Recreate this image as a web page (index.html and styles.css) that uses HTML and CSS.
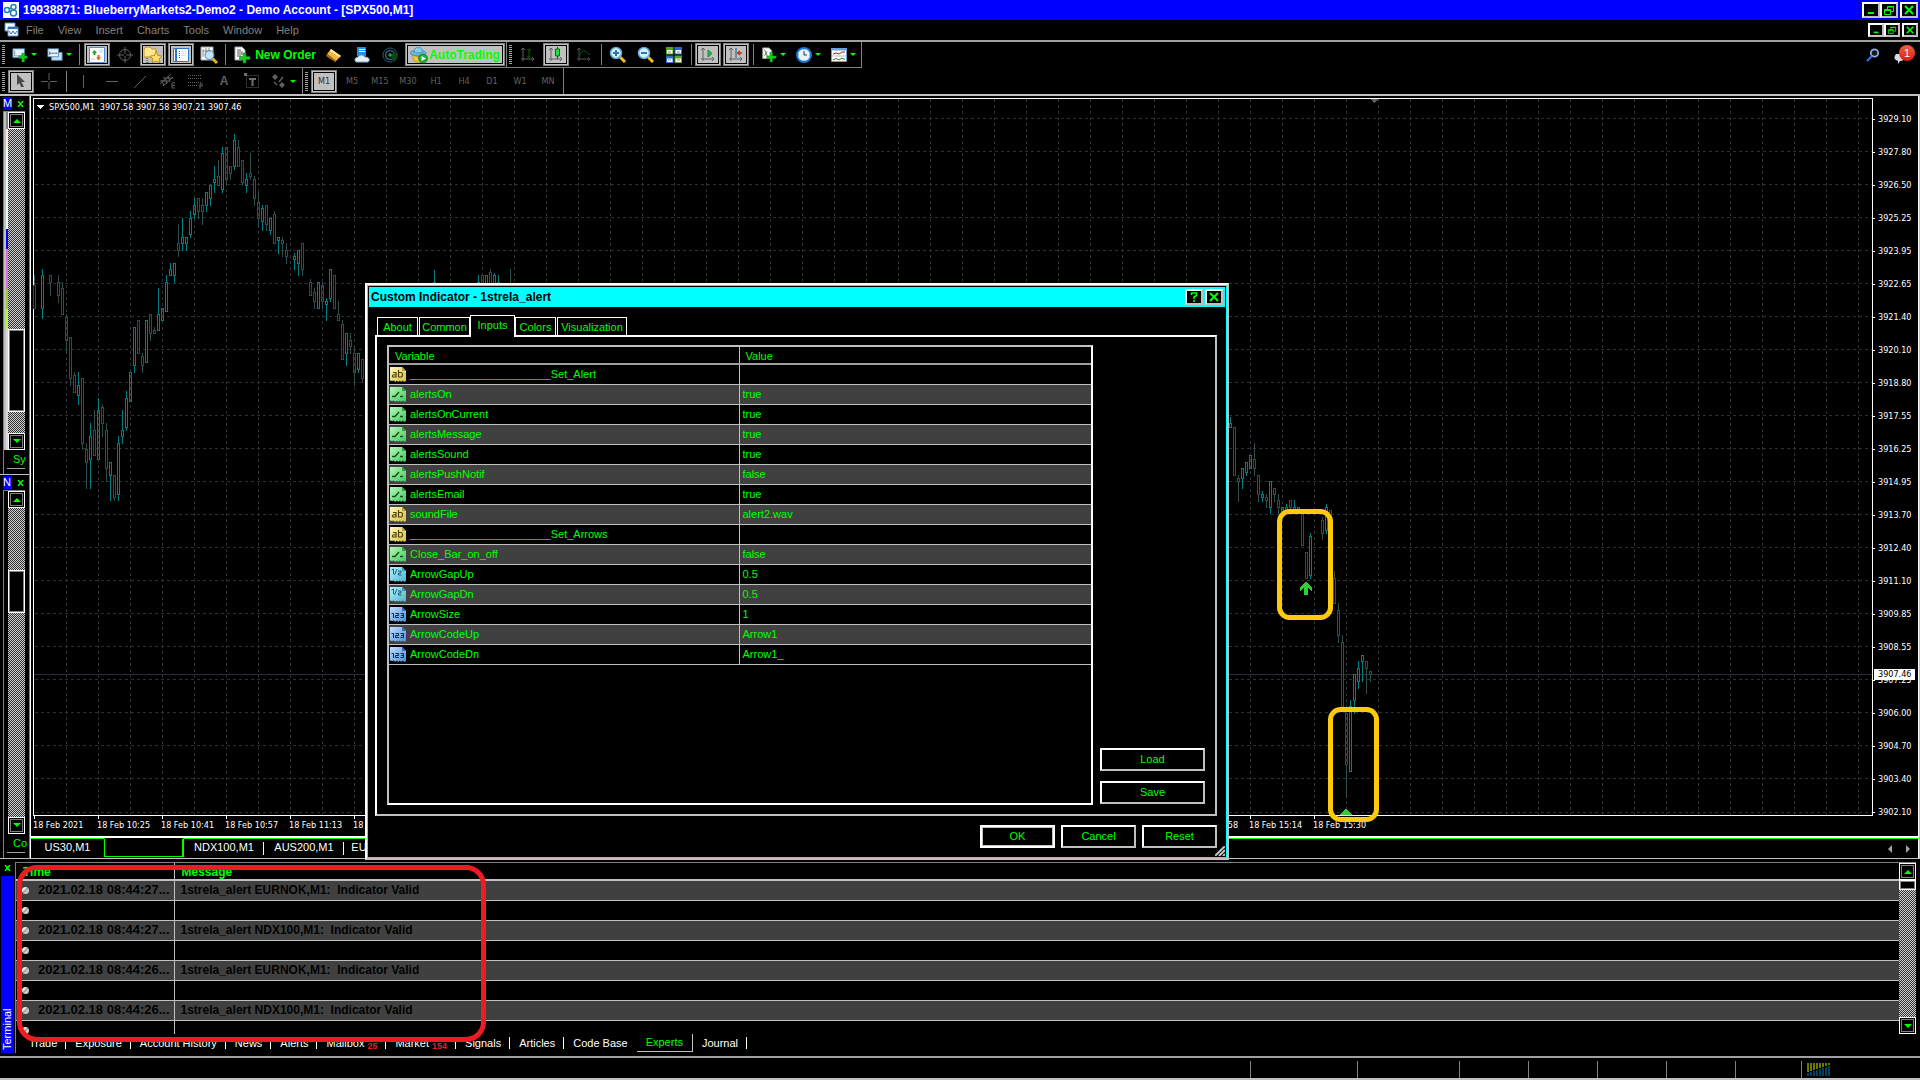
FILE: index.html
```html
<!DOCTYPE html>
<html lang="en">
<head>
<meta charset="utf-8">
<title>19938871: BlueberryMarkets2-Demo2 - Demo Account - [SPX500,M1]</title>
<link rel="stylesheet" href="styles.css">
</head>
<body>
<svg class="sprite" aria-hidden="true">
  <defs>
    <linearGradient id="gy" x2="1" y2="1"><stop offset="0" stop-color="#fff7c0"/><stop offset="1" stop-color="#d8c040"/></linearGradient>
    <linearGradient id="gg" x2="1" y2="1"><stop offset="0" stop-color="#b8f8b8"/><stop offset="1" stop-color="#40c860"/></linearGradient>
    <linearGradient id="gc" x2="1" y2="1"><stop offset="0" stop-color="#b8f4ff"/><stop offset="1" stop-color="#50b0d0"/></linearGradient>
    <linearGradient id="gb" x2="1" y2="1"><stop offset="0" stop-color="#c0e0ff"/><stop offset="1" stop-color="#5090d8"/></linearGradient>
    <linearGradient id="gr" x2="0" y2="1"><stop offset="0" stop-color="#f06040"/><stop offset="1" stop-color="#d82010"/></linearGradient>
    <path id="tag" d="M0 1H12L16 5V15L14 16L13 14.500L11 16L10 14.500L8 16L7 14.500L5 16L4 14.500L2 15L0 14.500Z"/>
    <path id="axes" d="M3 1V14M1 12H14M1 3L3 1L5 3M12 10L14 12L12 14" fill="none"/>
  </defs>
  <symbol id="i-str" viewBox="0 0 16 16"><use href="#tag" fill="url(#gy)"/><path d="M12 1V5H16" fill="#b8a030"/><g fill="none" stroke="#504400" stroke-width="1.200"><path d="M3 6.500H6V11H3.500Q2 11 2.500 9.500Q3 8.500 6 8.500M8.500 4V11H11Q12.500 11 12.500 8.500Q12.500 6.500 11 6.500H8.500"/></g></symbol>
  <symbol id="i-bool" viewBox="0 0 16 16"><use href="#tag" fill="url(#gg)"/><path d="M12 1V5H16" fill="#30a040"/><path d="M2 10.500H5L9 6M10 10.500H13" fill="none" stroke="#045010" stroke-width="1.400"/></symbol>
  <symbol id="i-dbl" viewBox="0 0 16 16"><use href="#tag" fill="url(#gc)"/><path d="M12 1V5H16" fill="#4090b0"/><path d="M1.500 4L3.500 3V8M4.500 9L7 3M8 5H11V7H8.500V9H11.500" fill="none" stroke="#106078" stroke-width="1"/></symbol>
  <symbol id="i-int" viewBox="0 0 16 16"><use href="#tag" fill="url(#gb)"/><path d="M12 1V5H16" fill="#3868b0"/><path d="M1.500 7.500H3.500V12M5.500 7.500H8.500V9.500H5.500V11.500H9M10.500 7.500H13.500V11.500H10.500M11 9.500H13" fill="none" stroke="#002858" stroke-width="1"/></symbol>
  <symbol id="i-logo" viewBox="0 0 16 16"><path d="M0 0H16V16H0Z" fill="#fff"/><g fill="none" stroke="#2080b0" stroke-width="1.500"><circle cx="4" cy="8" r="2.500"/><circle cx="10.500" cy="5" r="2.500"/><circle cx="10.500" cy="11" r="3"/><path d="M6 7L8 6M6 9L8 10"/></g></symbol>
  <symbol id="i-mdi" viewBox="0 0 16 16"><path d="M1 1H11V9H1Z" fill="#fff" stroke="#5090d0"/><path d="M4 5H14V14H4Z" fill="#fff" stroke="#5090d0"/><path d="M4 6H14" stroke="#3070c0" stroke-width="2"/><path d="M5 9L7 12L9 9L11 12L13 9" fill="none" stroke="#3070c0"/></symbol>
  <symbol id="i-newchart" viewBox="0 0 18 16"><path d="M1 1H14V11H1Z" fill="#e8f4fc" stroke="#4888b8"/><path d="M3 3V9H12" fill="none" stroke="#888"/><path d="M11 6H14V9H17V12H14V16H11V12H8V9H11Z" fill="#10d020" stroke="#087010" stroke-width=".5"/></symbol>
  <symbol id="i-profiles" viewBox="0 0 18 16"><path d="M5 5H17V14H5Z" fill="#c8e0f4" stroke="#4888b8"/><path d="M1 1H13V10H1Z" fill="#e8f4fc" stroke="#4888b8"/><path d="M3 6H11M3 4V8M11 5V7" stroke="#667"/></symbol>
  <symbol id="i-mw" viewBox="0 0 16 16"><path d="M.5.5H15.500V15.500H.5Z" fill="#fff" stroke="#5090d0"/><path d="M3 6L5.500 3L8 6H6.500V8H4.500V6Z" fill="#18a028"/><path d="M7 10.500L9.500 13.500L12 10.500H10.500V8H8.500V10.500Z" fill="#e06020"/><path d="M2 12H6M10 3H14M10 5H14" stroke="#ccc"/></symbol>
  <symbol id="i-cross" viewBox="0 0 16 16"><g fill="none" stroke="#606060"><circle cx="8" cy="8" r="5.500"/><path d="M8 0V7M8 9V16M0 8H7M9 8H16"/></g></symbol>
  <symbol id="i-nav" viewBox="0 0 18 18"><path d="M0 3L2 1H6L8 3H12V11H0Z" fill="#ffe890" stroke="#c09020"/><path d="M3 12V17H6" fill="none" stroke="#333" stroke-dasharray="1 1"/><path d="M12 5L14 9.500L18 10L15 13L16 17L12 15L8 17L9 13L6 10L10.500 9.500Z" fill="#ffe060" stroke="#b07810" stroke-width=".8"/></symbol>
  <symbol id="i-term" viewBox="0 0 16 16"><path d="M.5 1.500H15.500V14.500H.5Z" fill="#fff" stroke="#2878c8"/><path d="M3 2V14" stroke="#2878c8" stroke-width="2"/><path d="M6 4.500H7M6 6.500H7M6 8.500H7M6 10.500H7" stroke="#d02020"/><path d="M8 4.500H13M8 6.500H13M8 8.500H13" stroke="#dde"/></symbol>
  <symbol id="i-tester" viewBox="0 0 18 18"><path d="M1 1H13V14H1Z" fill="#fff" stroke="#aaa"/><path d="M3 3V11M6 2V9M9 2V7M3 5H11" stroke="#888"/><path d="M12 12L17 17" stroke="#e0b020" stroke-width="3"/><circle cx="9.500" cy="9" r="4.500" fill="#b8dcf8" fill-opacity=".8" stroke="#5080b0"/></symbol>
  <symbol id="i-order" viewBox="0 0 16 18"><path d="M1 1H8L11 4V14H1Z" fill="#fff" stroke="#aaa"/><path d="M3 4H7M3 6H9M3 8H9M3 10H7" stroke="#555"/><path d="M9 7H12V10.500H16V13.500H12V17H9V13.500H5.500V10.500H9Z" fill="#10d020" stroke="#087010" stroke-width=".5"/></symbol>
  <symbol id="i-gold" viewBox="0 0 16 16"><path d="M5 2L15 9L10 14L1 7Z" fill="#f0b838"/><path d="M5 2L15 9L13 10L4 4Z" fill="#ffe8a0"/><path d="M1 7L10 14V15.500L0 9Z" fill="#a86c10"/></symbol>
  <symbol id="i-cloud" viewBox="0 0 16 16"><path d="M3 0H12V9H3Z" fill="#1890f0"/><path d="M5 2.500H11M5 4.500H11" stroke="#fff"/><path d="M2 15Q-1 11 4 10Q7 6 11 10Q16 10 15 14L14 15Z" fill="#e8f0fa" stroke="#80a8d0"/></symbol>
  <symbol id="i-radar" viewBox="0 0 16 16"><g fill="none"><circle cx="8" cy="8" r="7" stroke="#305878"/><circle cx="8" cy="8" r="4.500" stroke="#2c6080" stroke-width="1.500"/><path d="M8 8L12 15A8 8 0 0 0 15 5" fill="#084818"/></g><circle cx="8" cy="8" r="1.800" fill="#18a030"/></symbol>
  <symbol id="i-auto" viewBox="0 0 18 18"><path d="M2 8Q9 14 15 7L13 15Q8 18 4 15Z" fill="#f0c838" stroke="#a88010" stroke-width=".6"/><ellipse cx="8" cy="7" rx="8" ry="2.800" fill="#68b8e0" stroke="#2878a0" stroke-width=".6"/><path d="M4 6Q5 0 8 2Q12 0 12.500 6Q8 8 4 6" fill="#88d0f0" stroke="#2878a0" stroke-width=".6"/><circle cx="13" cy="12.500" r="4.500" fill="#18b030" stroke="#086818" stroke-width=".6"/><path d="M11.500 10L16 12.500L11.500 15Z" fill="#fff"/></symbol>
  <symbol id="i-bars" viewBox="0 0 16 16"><use href="#axes" stroke="#606060"/><path d="M9 2V11M9 3H11M7 10H9" fill="none" stroke="#007000"/></symbol>
  <symbol id="i-candle" viewBox="0 0 16 16"><use href="#axes" stroke="#606060"/><path d="M9.500 0V12" stroke="#006000"/><path d="M7.500 2H11.500V9H7.500Z" fill="#20e040" stroke="#007010"/></symbol>
  <symbol id="i-line" viewBox="0 0 16 16"><use href="#axes" stroke="#505050"/><path d="M3 10Q6 2 9 4T14 8" fill="none" stroke="#006000"/></symbol>
  <symbol id="i-zin" viewBox="0 0 18 18"><path d="M10 10L16 16" stroke="#f0c020" stroke-width="3"/><circle cx="7" cy="7" r="5.500" fill="#d8f0ff" stroke="#60a8d8" stroke-width="1.500"/><path d="M4 7H10M7 4V10" stroke="#2878a8" stroke-width="2"/></symbol>
  <symbol id="i-zout" viewBox="0 0 18 18"><path d="M10 10L16 16" stroke="#f0c020" stroke-width="3"/><circle cx="7" cy="7" r="5.500" fill="#d8f0ff" stroke="#60a8d8" stroke-width="1.500"/><path d="M4 7H10" stroke="#2878a8" stroke-width="2"/></symbol>
  <symbol id="i-tile" viewBox="0 0 16 16"><path d="M0 0H7.500V7.500H0ZM8.500 8.500H16V16H8.500Z" fill="#50a818"/><path d="M8.500 0H16V7.500H8.500ZM0 8.500H7.500V16H0Z" fill="#2868d8"/><path d="M1 3H6.500V6.500H1ZM9.500 3H15V6.500H9.500ZM1 11.500H6.500V15H1ZM9.500 11.500H15V15H9.500Z" fill="#fff"/><path d="M2 5H5M11 5H14M2 13H5M11 13H14" stroke="#888"/></symbol>
  <symbol id="i-scroll" viewBox="0 0 16 16"><use href="#axes" stroke="#606060"/><path d="M8 3L12 6.500L8 10Z" fill="#20c040" stroke="#007010" stroke-width=".7"/></symbol>
  <symbol id="i-shift" viewBox="0 0 16 16"><use href="#axes" stroke="#606060"/><path d="M8 1V11" stroke="#0060a0"/><path d="M14 6H10M12 4L9.500 6L12 8" fill="none" stroke="#d03000" stroke-width="1.300"/></symbol>
  <symbol id="i-ind" viewBox="0 0 16 18"><path d="M1 1H8L11 4V13H1Z" fill="#fff" stroke="#aaa"/><path d="M3 3L6 10M3 10L6 5" stroke="#665"/><path d="M9 6H12V10H16V13H12V17H9V13H5.500V10H9Z" fill="#10d020" stroke="#087010" stroke-width=".5"/></symbol>
  <symbol id="i-clock" viewBox="0 0 16 16"><circle cx="8" cy="8" r="7" fill="#e8f4fc" stroke="#1878d8" stroke-width="2"/><path d="M8 4V8H11" fill="none" stroke="#333"/><path d="M8 3V2M8 14V13M3 8H2M14 8H13" stroke="#888"/></symbol>
  <symbol id="i-tmpl" viewBox="0 0 16 14"><path d="M.5.5H15.500V13.500H.5Z" fill="#fff" stroke="#68a0d8"/><path d="M0 1.500H16" stroke="#68a0d8" stroke-width="2"/><path d="M2 6L5 5L8 6L11 4H14" fill="none" stroke="#a02818"/><path d="M1 8H15" stroke="#bbb"/><path d="M2 12L5 10.500L8 12L11 10L14 11.500" fill="none" stroke="#188028"/></symbol>
  <symbol id="i-search" viewBox="0 0 14 14"><circle cx="8.500" cy="5" r="3.700" fill="#e0e8ff" fill-opacity=".1" stroke="#90a8e8" stroke-width="1.800"/><path d="M6 8L1 13" stroke="#3070e0" stroke-width="2.200"/></symbol>
  <symbol id="i-bubble" viewBox="0 0 24 20"><path d="M3 9H11Q13 16 7 16L5 19V16Q-1 14 3 9Z" fill="#d8d8e8"/><circle cx="14" cy="8" r="8" fill="url(#gr)"/></symbol>
  <symbol id="i-arrow" viewBox="0 0 16 16"><path d="M4 1L12 9H8.500L11 14H8L6.500 10L4 12Z" fill="#484848"/></symbol>
  <symbol id="i-plus" viewBox="0 0 16 16"><path d="M8 0V7M8 9V16M0 8.500H7M9 8.500H16" stroke="#606060"/></symbol>
  <symbol id="i-v" viewBox="0 0 16 16"><path d="M7.500 2V15" stroke="#606060"/></symbol>
  <symbol id="i-h" viewBox="0 0 16 16"><path d="M2 8.500H14" stroke="#606060"/></symbol>
  <symbol id="i-t" viewBox="0 0 16 16"><path d="M2 15L14 3" stroke="#606060"/></symbol>
  <symbol id="i-ch" viewBox="0 0 16 16"><path d="M0 11L11 1M3 13L13 4M2 7L4 13M5 5L7 11M8 3L10 9M0 8H8M3 5H13" stroke="#606060" fill="none"/><path d="M15 10H12V15H15M12 12.500H15" fill="none" stroke="#606060"/></symbol>
  <symbol id="i-fib" viewBox="0 0 16 16"><path d="M0 2.500H14M0 5.500H14M0 9.500H14M0 12.500H9" stroke="#606060" stroke-dasharray="1 1"/><path d="M15 11H12V16M12 13H15" fill="none" stroke="#606060"/></symbol>
  <symbol id="i-txt" viewBox="0 0 16 16"><path d="M2.500 2.500H14.500V14.500H2.500Z" fill="none" stroke="#606060" stroke-dasharray="1 1"/><path d="M5 6H12M8.500 6V13" stroke="#707070" stroke-width="2"/><path d="M0 0H3V3H0Z" fill="#707070"/></symbol>
  <symbol id="i-obj" viewBox="0 0 16 16"><path d="M4 1L7 4L4 7L1 4ZM11 15L8 12L11 9L14 12Z" fill="#606060"/><path d="M3 9L6 12M8 9L12 4" fill="none" stroke="#606060" stroke-width="1.500"/></symbol>
  <symbol id="w-min" viewBox="0 0 12 10"><path d="M3 8H9" stroke="#0f0" stroke-width="2"/></symbol>
  <symbol id="w-res" viewBox="0 0 12 10"><path d="M4.500 4V1.500H10.500V6.500H8M1.500 4.500H7.500V9.500H1.500ZM1.500 5.500H7.500M4 2H11" fill="none" stroke="#0f0"/></symbol>
  <symbol id="w-close" viewBox="0 0 12 10"><path d="M2 1L10 9M10 1L2 9" stroke="#0f0" stroke-width="2"/></symbol>
  <symbol id="w-help" viewBox="0 0 12 10"><path d="M3.500 3V1H8.500V3.500L6 5V7M6 8V10" fill="none" stroke="#0f0" stroke-width="1.600"/></symbol>
</svg>

<header class="titlebar">
  <svg class="ic16"><use href="#i-logo"/></svg>
  <h1>19938871: BlueberryMarkets2-Demo2 - Demo Account - [SPX500,M1]</h1>
  <div class="winbtns">
    <button aria-label="Minimize"><svg><use href="#w-min"/></svg></button><button aria-label="Restore"><svg><use href="#w-res"/></svg></button><button class="close" aria-label="Close"><svg><use href="#w-close"/></svg></button>
  </div>
</header>
<nav class="menubar">
  <svg class="ic16"><use href="#i-mdi"/></svg>
  <button>File</button><button>View</button><button>Insert</button><button>Charts</button><button>Tools</button><button>Window</button><button>Help</button>
  <div class="winbtns small">
    <button aria-label="Minimize chart"><svg><use href="#w-min"/></svg></button><button aria-label="Restore chart"><svg><use href="#w-res"/></svg></button><button class="close" aria-label="Close chart"><svg><use href="#w-close"/></svg></button>
  </div>
</nav>

<section class="toolbars">
  <div class="row">
    <div class="bar bordered standard">
      <i class="grip"></i>
      <button class="tb drop" aria-label="New chart"><svg><use href="#i-newchart"/></svg></button>
      <button class="tb drop" aria-label="Profiles"><svg><use href="#i-profiles"/></svg></button>
      <i class="sep"></i>
      <button class="tb on" aria-label="Market Watch"><svg><use href="#i-mw"/></svg></button>
      <button class="tb" aria-label="Data Window"><svg><use href="#i-cross"/></svg></button>
      <button class="tb on" aria-label="Navigator"><svg class="big"><use href="#i-nav"/></svg></button>
      <button class="tb on" aria-label="Terminal"><svg><use href="#i-term"/></svg></button>
      <button class="tb" aria-label="Strategy Tester"><svg class="big"><use href="#i-tester"/></svg></button>
      <i class="sep"></i>
      <button class="tb wide"><svg class="big"><use href="#i-order"/></svg>New Order</button>
      <button class="tb" aria-label="MetaEditor"><svg><use href="#i-gold"/></svg></button>
      <button class="tb" aria-label="Hosting"><svg><use href="#i-cloud"/></svg></button>
      <button class="tb" aria-label="Signals"><svg><use href="#i-radar"/></svg></button>
      <button class="tb on wide auto"><svg class="big"><use href="#i-auto"/></svg>AutoTrading</button>
    </div>
    <div class="bar bordered charting">
      <i class="grip"></i>
      <button class="tb" aria-label="Bar chart"><svg><use href="#i-bars"/></svg></button>
      <button class="tb on" aria-label="Candlesticks"><svg><use href="#i-candle"/></svg></button>
      <button class="tb" aria-label="Line chart"><svg><use href="#i-line"/></svg></button>
      <i class="sep"></i>
      <button class="tb" aria-label="Zoom in"><svg class="big"><use href="#i-zin"/></svg></button>
      <button class="tb" aria-label="Zoom out"><svg class="big"><use href="#i-zout"/></svg></button>
      <button class="tb" aria-label="Tile windows"><svg><use href="#i-tile"/></svg></button>
      <i class="sep"></i>
      <button class="tb on" aria-label="Auto scroll"><svg><use href="#i-scroll"/></svg></button>
      <button class="tb on" aria-label="Chart shift"><svg><use href="#i-shift"/></svg></button>
      <i class="sep"></i>
      <button class="tb drop" aria-label="Indicators"><svg><use href="#i-ind"/></svg></button>
      <button class="tb drop" aria-label="Periods"><svg><use href="#i-clock"/></svg></button>
      <button class="tb drop" aria-label="Templates"><svg><use href="#i-tmpl"/></svg></button>
    </div>
    <div class="corner">
      <button aria-label="Search"><svg class="search"><use href="#i-search"/></svg></button>
      <button class="bubble"><svg><use href="#i-bubble"/></svg><span>1</span></button>
    </div>
  </div>
  <div class="row">
    <div class="bar">
      <i class="grip"></i>
      <button class="tb on" aria-label="Cursor"><svg><use href="#i-arrow"/></svg></button>
      <button class="tb" aria-label="Crosshair"><svg><use href="#i-plus"/></svg></button>
      <i class="sep"></i>
      <button class="tb" aria-label="Vertical line"><svg><use href="#i-v"/></svg></button>
      <button class="tb" aria-label="Horizontal line"><svg><use href="#i-h"/></svg></button>
      <button class="tb" aria-label="Trendline"><svg><use href="#i-t"/></svg></button>
      <button class="tb" aria-label="Channel"><svg><use href="#i-ch"/></svg></button>
      <button class="tb" aria-label="Fibonacci"><svg><use href="#i-fib"/></svg></button>
      <button class="tb letter">A</button>
      <button class="tb" aria-label="Text label"><svg><use href="#i-txt"/></svg></button>
      <button class="tb drop" aria-label="Arrows"><svg><use href="#i-obj"/></svg></button>
    </div>
    <div class="bar frames">
      <i class="grip"></i>
      <button class="tb on">M1</button><button class="tb">M5</button><button class="tb">M15</button><button class="tb">M30</button><button class="tb">H1</button><button class="tb">H4</button><button class="tb">D1</button><button class="tb">W1</button><button class="tb">MN</button>
    </div>
  </div>
</section>

<main class="work">
  <aside class="docks">
    <section class="dock market">
      <header><b>M</b><button class="x" aria-label="Close Market Watch"><svg viewBox="0 0 7 6"><path d="M1 0L6 6M6 0L1 6" stroke="#0f0" stroke-width="1.500"/></svg></button></header>
      <div class="dockbody">
        <div class="swatches"><i class="s0"></i><i class="s1"></i><i class="s2"></i><i class="s3"></i><i class="s4"></i><i class="s5"></i><i class="s6"></i><i class="s7"></i><i class="s8"></i></div>
        <div class="scroll"><button class="up" aria-label="Up"></button><i class="g201"></i><b class="g82"></b><i class="g21"></i><button class="down" aria-label="Down"></button></div>
      </div>
      <footer><span>Sy</span></footer>
    </section>
    <section class="dock navi">
      <header><b>N</b><button class="x" aria-label="Close Navigator"><svg viewBox="0 0 7 6"><path d="M1 0L6 6M6 0L1 6" stroke="#0f0" stroke-width="1.500"/></svg></button></header>
      <div class="dockbody">
        <div class="swatches empty"></div>
        <div class="scroll"><button class="up" aria-label="Up"></button><i class="g62"></i><b class="g41"></b><i class="g205"></i><button class="down" aria-label="Down"></button></div>
      </div>
      <footer><span>Co</span></footer>
    </section>
  </aside>
  <section class="chartcol">
    <div class="frame">
      <div class="plotrow">
        <div class="plot">
          <p class="quote">SPX500,M1&nbsp; 3907.58 3907.58 3907.21 3907.46</p>
          <svg id="chart" role="img" aria-label="SPX500 one minute candles"></svg>
        </div>
        <ol class="prices">
          <li>3929.10</li><li>3927.80</li><li>3926.50</li><li>3925.25</li><li>3923.95</li><li>3922.65</li><li>3921.40</li><li>3920.10</li><li>3918.80</li><li>3917.55</li><li>3916.25</li><li>3914.95</li><li>3913.70</li><li>3912.40</li><li>3911.10</li><li>3909.85</li><li>3908.55</li><li>3907.25<mark>3907.46</mark></li><li>3906.00</li><li>3904.70</li><li>3903.40</li><li>3902.10</li>
        </ol>
      </div>
      <ol class="times">
        <li>18 Feb 2021</li><li>18 Feb 10:25</li><li>18 Feb 10:41</li><li>18 Feb 10:57</li><li>18 Feb 11:13</li><li>18 Feb 11:29</li><li></li><li></li><li></li><li></li><li></li><li></li><li></li><li></li><li></li><li></li><li></li><li></li><li>18 Feb 14:58</li><li>18 Feb 15:14</li><li>18 Feb 15:30</li>
      </ol>
    </div>
    <nav class="charttabs">
      <button>US30,M1</button><button class="cur" aria-label="SPX500,M1"></button><button>NDX100,M1</button><button>AUS200,M1</button><button>EURNOK,M1</button>
      <div class="arrows"><button class="l" aria-label="Scroll left"></button><button class="r" aria-label="Scroll right"></button></div>
    </nav>
  </section>
</main>

<section class="terminal">
  <div class="side">
    <button class="x" aria-label="Close Terminal"><svg viewBox="0 0 7 6"><path d="M1 0L6 6M6 0L1 6" stroke="#0f0" stroke-width="1.500"/></svg></button>
    <h2>Terminal</h2>
  </div>
  <div class="log">
    <div class="logrow">
      <div class="logview">
        <table>
          <colgroup><col class="ctime"><col></colgroup>
          <thead><tr><th>Time</th><th>Message</th></tr></thead>
          <tbody>
            <tr><td><i></i>2021.02.18 08:44:27...</td><td>1strela_alert EURNOK,M1:&nbsp; Indicator Valid</td></tr>
            <tr><td><i></i></td><td></td></tr>
            <tr><td><i></i>2021.02.18 08:44:27...</td><td>1strela_alert NDX100,M1:&nbsp; Indicator Valid</td></tr>
            <tr><td><i></i></td><td></td></tr>
            <tr><td><i></i>2021.02.18 08:44:26...</td><td>1strela_alert EURNOK,M1:&nbsp; Indicator Valid</td></tr>
            <tr><td><i></i></td><td></td></tr>
            <tr><td><i></i>2021.02.18 08:44:26...</td><td>1strela_alert NDX100,M1:&nbsp; Indicator Valid</td></tr>
            <tr><td><i></i></td><td></td></tr>
          </tbody>
        </table>
      </div>
      <div class="scroll"><button class="up" aria-label="Up"></button><b class="g8"></b><i class="g128"></i><button class="down" aria-label="Down"></button></div>
    </div>
    <nav class="termtabs">
      <button>Trade</button><button>Exposure</button><button>Account History</button><button>News</button><button>Alerts</button><button>Mailbox<sub>25</sub></button><button>Market<sub>154</sub></button><button>Signals</button><button>Articles</button><button class="last">Code Base</button><button class="cur">Experts</button><button>Journal</button>
    </nav>
  </div>
  <div class="redbox"></div>
</section>

<footer class="status">
  <span class="c1"></span><span class="c2"></span><span class="c3"></span><span class="c3"></span><span class="c3"></span><span class="c3"></span><span class="c4"></span>
  <span class="conn"><svg viewBox="0 0 23 13"><path d="M1 0V9M4 0V8M7 0V7M10 0V6M13 0V5M16 0V4M19 0V3M22 0V2" stroke="#6a7a00" stroke-width="2"/><path d="M1 10V13M4 9V13M7 8V13M10 7V13M13 6V13M16 5V13M19 4V13M22 3V13" stroke="#004060" stroke-width="2"/></svg></span>
</footer>

<section class="dialog" role="dialog" aria-labelledby="dlg">
  <div class="inner">
    <header><h2 id="dlg">Custom Indicator - 1strela_alert</h2>
      <div class="winbtns"><button aria-label="Help"><svg><use href="#w-help"/></svg></button><button class="close" aria-label="Close"><svg><use href="#w-close"/></svg></button></div>
    </header>
    <div class="body">
      <div class="tabs"><button class="t40">About</button><button class="t51">Common</button><button class="cur">Inputs</button><button class="t40">Colors</button><button class="t69">Visualization</button></div>
      <div class="pane">
        <div class="list">
          <table>
            <colgroup><col class="cvar"><col></colgroup>
            <thead><tr><th>Variable</th><th>Value</th></tr></thead>
            <tbody>
              <tr><td><svg><use href="#i-str"/></svg>_______________________Set_Alert</td><td></td></tr>
              <tr><td><svg><use href="#i-bool"/></svg>alertsOn</td><td>true</td></tr>
              <tr><td><svg><use href="#i-bool"/></svg>alertsOnCurrent</td><td>true</td></tr>
              <tr><td><svg><use href="#i-bool"/></svg>alertsMessage</td><td>true</td></tr>
              <tr><td><svg><use href="#i-bool"/></svg>alertsSound</td><td>true</td></tr>
              <tr><td><svg><use href="#i-bool"/></svg>alertsPushNotif</td><td>false</td></tr>
              <tr><td><svg><use href="#i-bool"/></svg>alertsEmail</td><td>true</td></tr>
              <tr><td><svg><use href="#i-str"/></svg>soundFile</td><td>alert2.wav</td></tr>
              <tr><td><svg><use href="#i-str"/></svg>_______________________Set_Arrows</td><td></td></tr>
              <tr><td><svg><use href="#i-bool"/></svg>Close_Bar_on_off</td><td>false</td></tr>
              <tr><td><svg><use href="#i-dbl"/></svg>ArrowGapUp</td><td>0.5</td></tr>
              <tr><td><svg><use href="#i-dbl"/></svg>ArrowGapDn</td><td>0.5</td></tr>
              <tr><td><svg><use href="#i-int"/></svg>ArrowSize</td><td>1</td></tr>
              <tr><td><svg><use href="#i-int"/></svg>ArrowCodeUp</td><td>Arrow1</td></tr>
              <tr><td><svg><use href="#i-int"/></svg>ArrowCodeDn</td><td>Arrow1_</td></tr>
            </tbody>
          </table>
        </div>
        <div class="sidebtns"><button class="btn">Load</button><button class="btn">Save</button></div>
      </div>
      <div class="foot"><button class="btn default">OK</button><button class="btn">Cancel</button><button class="btn">Reset</button></div>
    </div>
    <svg class="sizer" viewBox="0 0 10 10"><path d="M0 10L10 0M4 10L10 4M8 10L10 8" stroke="#c0c0c0" stroke-width="2"/></svg>
  </div>
</section>
<script src="chart.js"></script>
</body>
</html>
```
FILE: chart.js
```js
// Each candle: x, high, body top, body bottom, low, direction (1 up, 0 down), in window coordinates.
const candles = [
[34,275,285,308,308,0],[42,269,275,308,318,1],[50,275,275,282,295,0],[58,275,282,295,302,0],[62,282,288,314,314,0],[66,314,317,340,353,0],
[70,337,337,378,385,0],[74,372,375,392,392,0],[78,372,385,395,404,1],[82,378,378,443,449,0],[86,443,449,462,488,0],[90,423,436,459,488,1],
[94,410,430,455,455,0],[98,398,410,459,459,1],[102,404,407,423,436,0],[106,423,430,468,481,0],[110,462,462,475,500,1],[114,475,475,497,500,0],
[118,436,443,494,500,1],[122,410,430,436,443,1],[126,391,398,427,430,1],[130,372,372,401,401,1],[134,327,327,365,372,1],[138,320,320,353,353,0],
[142,353,356,365,372,0],[146,320,320,362,362,1],[150,314,314,333,340,0],[154,327,330,333,333,0],[158,288,314,330,330,1],[162,308,308,320,320,1],
[166,275,282,311,311,1],[170,263,269,275,275,1],[174,263,263,275,282,1],[178,224,243,250,256,0],[182,218,237,243,250,1],[186,237,237,243,250,1],
[190,211,218,234,237,1],[194,198,205,214,218,1],[198,198,198,211,218,0],[202,198,205,211,224,0],[206,192,192,205,211,1],[210,185,185,198,205,1],
[214,166,179,182,192,1],[218,160,176,185,185,0],[222,147,153,189,192,1],[226,147,147,179,185,0],[230,166,166,173,179,0],[234,134,140,166,169,1],
[238,140,147,166,166,0],[242,160,160,182,185,0],[246,173,179,185,192,1],[250,153,173,176,179,0],[254,176,179,198,205,0],[258,192,202,218,227,0],
[262,205,208,221,230,1],[266,205,205,224,230,0],[270,218,218,230,234,1],[274,211,214,243,243,0],[278,237,237,240,253,1],[282,237,240,243,256,0],
[286,243,250,256,263,0],[294,253,256,259,269,1],[298,250,250,263,275,1],[302,243,243,269,275,0],[310,279,282,295,295,0],[314,288,292,301,308,0],
[318,282,282,308,308,1],[322,282,285,301,308,0],[326,298,301,304,320,1],[330,269,269,298,301,1],[334,275,275,308,308,0],[338,301,314,320,320,0],
[342,320,324,359,359,0],[346,333,333,353,365,1],[350,333,340,346,353,0],[354,346,353,372,385,0],[358,353,353,369,372,1],[362,359,359,378,382,0],
[434,270,282,284,284,1],[478,275,282,284,284,1],[482,275,275,284,284,0],[486,275,275,284,284,1],[490,269,272,284,284,0],[494,273,275,284,284,1],[498,275,282,284,284,1],[510,269,290,292,292,0],
[1230,417,423,427,427,1],[1234,427,427,475,475,0],[1238,475,478,481,501,0],[1242,468,468,478,488,1],[1246,462,462,472,475,1],[1250,455,455,468,468,1],
[1254,443,459,468,475,0],[1258,475,475,494,501,0],[1262,491,494,497,501,1],[1266,494,497,500,507,0],[1270,481,481,507,513,1],[1274,488,488,494,501,0],
[1278,494,500,507,513,0],[1282,507,507,512,512,1],[1286,504,507,512,512,1],[1290,500,500,507,512,0],[1294,500,507,512,512,1],[1298,507,507,512,512,1],
[1302,513,513,545,545,0],[1306,552,552,578,578,0],[1310,533,536,575,578,1],[1322,517,520,533,539,0],[1326,504,507,530,533,1],[1330,510,510,560,560,0],
[1334,571,578,603,603,0],[1338,603,610,635,642,0],[1342,635,642,706,706,0],[1346,713,713,764,797,0],[1350,700,706,771,771,1],[1354,674,674,700,713,1],
[1358,661,668,681,688,1],[1362,655,655,661,681,1],[1366,661,661,668,693,0],[1370,671,671,674,681,0]
];

const plot = { left: 34, top: 99, right: 1872, bottom: 815 };
const parts = [];

for (let y = 118, n = 0; n < 22; n++, y += n === 21 ? 34 : 33) {
  parts.push(`<path class="grid" d="M35 ${y}.5H${plot.right}"/>`);
}
for (let x = 66; x < plot.right; x += 32) {
  parts.push(`<path class="grid" d="M${x}.5 99V${plot.bottom}"/>`);
}
parts.push(`<path class="last" d="M34 674.5H${plot.right}"/>`);

for (const [x, high, top, bottom, low, up] of candles) {
  const wick = (high < top ? `M${x}.5 ${high}V${top}` : '') + (low > bottom ? `M${x}.5 ${bottom + 1}V${low + 1}` : '');
  parts.push(`<path class="${up ? 'up' : 'down'}" d="M${x - 1}.5 ${top}.5H${x + 1}.5V${bottom}.5H${x - 1}.5Z${wick}"/>`);
}

parts.push('<path class="marker" d="M1370 99H1379L1374 103Z"/>');
parts.push('<path class="caret" d="M37 105H44L40 109Z"/>');
parts.push('<path class="signal" d="M1306 581L1312 588V591L1308 588V595H1304V588L1300 591V588Z"/>');
parts.push('<path class="signal" d="M1346 808L1352 815H1340Z"/>');
parts.push('<rect class="note" x="1279.5" y="511.5" width="51" height="106" rx="10"/>');
parts.push('<rect class="note" x="1330.5" y="709.5" width="46" height="110" rx="10"/>');

document.getElementById('chart').innerHTML =
  `<g transform="translate(${-plot.left} ${-plot.top})">${parts.join('')}</g>`;
```
FILE: styles.css
```css
* { box-sizing: border-box; }

:root {
  --ui: "Liberation Sans", sans-serif;
  --axis: "DejaVu Sans Condensed", "DejaVu Sans", sans-serif;
}

body {
  margin: 0;
  min-height: 100vh;
  display: flex;
  flex-direction: column;
  position: relative;
  background: #000;
  color: #fff;
  font: 11px/16px var(--ui);
}

h1, h2, p, ol { margin: 0; padding: 0; }
ol { list-style: none; }
button { margin: 0; padding: 0; border: 0; background: none; color: inherit; font: inherit; white-space: nowrap; }
svg { display: block; flex: none; }
.sprite { position: absolute; width: 0; height: 0; }
.ic16 { width: 16px; height: 16px; }

/* title and menu */
.titlebar { display: flex; align-items: center; height: 20px; padding: 0 2px 0 3px; gap: 4px; background: #00f; }
.titlebar h1 { flex: 1; font: bold 12px/20px var(--ui); white-space: nowrap; }
.winbtns { display: flex; }
.winbtns button { width: 18px; height: 16px; padding: 1px; background: #000; border: 2px solid #c0c0c0; border-top-color: #fff; border-left-color: #fff; }
.winbtns svg { width: 12px; height: 10px; }
.winbtns .close { margin-left: 2px; }
.winbtns.small { margin-left: auto; }
.winbtns.small button { width: 16px; height: 14px; }
.winbtns.small svg { width: 10px; height: 8px; }
.menubar { display: flex; align-items: center; height: 20px; padding: 0 2px 0 4px; color: #808080; }
.menubar > .ic16 { margin-right: 6px; }
.menubar > button { margin-right: 14px; }

/* toolbars */
.toolbars { border-top: 2px solid #a0a0a0; border-bottom: 2px solid #c0c0c0; }
.row { display: flex; height: 26px; }
.bar { display: flex; align-items: center; gap: 2px; padding: 0 2px; border-right: 1px solid #808080; }
.bar.bordered { border-bottom: 1px solid #808080; padding-right: 1px; }
.grip { width: 3px; height: 19px; margin-right: 1px; background: repeating-linear-gradient(#a0a0a0 0 1px, #000 1px 2px); }
.sep { width: 1px; height: 21px; margin: 0 2px; background: #808080; }
.standard .sep { margin-left: 1px; }
.charting .sep { margin-right: 1px; }
.tb { display: flex; align-items: center; justify-content: center; width: 26px; height: 23px; }
.tb svg { width: 16px; height: 16px; }
.tb svg.big { width: 18px; height: 18px; }
.tb.on { background: #c0c0c0; border: 1px solid #808080; outline: 1px solid #000; outline-offset: -3px; }
.tb.drop { width: 33px; }
.tb.drop::after { content: ""; border: 3px solid transparent; border-top-color: #0f0; border-bottom: 0; margin-left: 3px; }
.tb.wide { width: 89px; gap: 4px; color: #0f0; font: bold 12px/16px var(--ui); }
.tb.auto { width: 100px; gap: 1px; }
.tb.letter { color: #606060; font: bold 12px/16px var(--ui); }
.frames { color: #606060; font: 9px/16px var(--axis); }
.frames .on { color: #303030; }
.corner { display: flex; align-items: center; gap: 13px; margin-left: auto; padding-right: 3px; }
.corner .search { width: 14px; height: 14px; }
.bubble { position: relative; }
.bubble svg { width: 24px; height: 20px; }
.bubble span { position: absolute; left: 10px; top: 0; width: 8px; text-align: center; }

/* work area */
.work { flex: 1; display: flex; }
.docks { display: flex; flex-direction: column; width: 30px; border-right: 1px solid #808080; }
.dock { display: flex; flex-direction: column; padding: 0 4px 0 3px; border-bottom: 1px solid #c0c0c0; }
.market { flex: 379; }
.navi { flex: 384; }
.dock header { display: flex; align-items: center; gap: 5px; height: 16px; border-bottom: 1px solid #808080; }
.dock header b { width: 9px; height: 13px; overflow: hidden; background: #00f; font-weight: normal; line-height: 13px; }
.x svg { width: 7px; height: 6px; }
.dockbody { flex: 1; display: flex; border-left: 1px solid #808080; }
.scroll { display: flex; flex-direction: column; width: 17px; flex: none; }
.scroll button { height: 17px; display: grid; place-items: center; border: 1px solid #fff; outline: 1px solid #808080; outline-offset: -3px; }
.scroll button::after { content: ""; border: 4px solid transparent; }
.scroll .up::after { border-bottom-color: #0f0; border-top: 0; }
.scroll .down::after { border-top-color: #0f0; border-bottom: 0; }
.scroll b { border: 1px solid #fff; outline: 1px solid #808080; outline-offset: -2px; }
.scroll i { background: repeating-conic-gradient(#d0d0d0 0 25%, #303030 0 50%) 0 0 / 2px 2px; }
.g201 { flex: 201; } .g82 { flex: 82; } .g21 { flex: 21; }
.g62 { flex: 62; } .g41 { flex: 41; } .g205 { flex: 205; }
.g8 { flex: 8; } .g128 { flex: 128; }
.swatches { display: flex; flex-direction: column; width: 4px; border-left: 2px solid #c0c0c0; }
.swatches.empty { border: 0; }
.s0 { flex: 17; background: #808080; } .s1 { flex: 20; background: #ffefdf; } .s2 { flex: 20; background: #f0fff0; }
.s3 { flex: 60; background: #e0ffff; } .s4 { flex: 20; background: #00f; } .s5 { flex: 40; background: #da70d6; }
.s6 { flex: 20; background: #9acd32; } .s7 { flex: 20; background: #adff2f; } .s8 { flex: 121; background: #d8d8d8; }
.dock footer { height: 24px; border-left: 1px solid #808080; padding: 1px 0 0 3px; color: #0f0; }
.dock footer span { display: block; height: 18px; padding-left: 6px; border-bottom: 1px solid #a0a0a0; }

.chartcol { flex: 1; min-width: 0; display: flex; flex-direction: column; border-right: 1px solid #c0c0c0; }
.frame { flex: 1; display: flex; flex-direction: column; padding: 2px 0 0 2px; border: 1px solid #fff; border-top: 0; border-bottom: 2px solid #fff; }
.plotrow { flex: 1; display: flex; }
.plot { flex: 1; min-width: 0; position: relative; border: 1px solid #fff; }
#chart { width: 100%; height: 100%; overflow: visible; }
#chart path { shape-rendering: crispEdges; fill: none; }
#chart .grid { stroke: #2b3038; stroke-dasharray: 3 3; }
#chart .last { stroke: #2b3038; }
#chart .up { stroke: #008080; }
#chart .down { stroke: #2f4f4f; }
#chart .marker { fill: #606060; }
#chart .caret { fill: #fff; }
#chart .signal { fill: #32cd32; }
#chart .note { fill: none; stroke: #ffc90e; stroke-width: 5; }
.quote { position: absolute; left: 15px; top: 1px; font: 9px/14px var(--axis); }
.prices { width: 45px; padding-top: 5px; font: 9px/33px var(--axis); }
.prices li { position: relative; display: flex; align-items: center; gap: 3px; height: 33px; }
.prices li:last-child { margin-bottom: -16px; }
.prices li::before { content: ""; width: 2px; height: 1px; background: #fff; }
.prices mark { position: absolute; left: 1px; top: 5px; width: 41px; padding-left: 4px; background: #fff; color: #000; line-height: 11px; }
.times { display: flex; height: 20px; font: 9px/16px var(--axis); white-space: nowrap; }
.times li { width: 64px; flex: none; }
.times li:not(:empty)::before { content: ""; display: block; width: 1px; height: 3px; background: #fff; margin: 0 0 -2px 1px; }

.charttabs { display: flex; height: 21px; border-top: 1px solid #0f0; border-bottom: 1px solid #c0c0c0; border-left: 1px solid #fff; border-right: 1px solid #fff; }
.charttabs > button { width: 80px; padding-bottom: 3px; }
.charttabs > button:first-child { width: 73px; }
.charttabs .cur { height: 19px; border: 1px solid #0f0; border-top: 1px solid #000; border-right-width: 2px; margin-top: -1px; }
.charttabs > button:nth-child(n+3):not(:nth-child(5)) { background: linear-gradient(#fff, #fff) 100% 3px / 1px 13px no-repeat; }
.arrows { margin-left: auto; display: flex; align-items: center; gap: 14px; padding-right: 8px; }
.arrows button { border: 4px solid transparent; }
.arrows .l { border-right-color: #a0a0a0; border-left: 0; }
.arrows .r { border-left-color: #a0a0a0; border-right: 0; }

/* terminal */
.terminal { position: relative; display: flex; padding: 3px 4px 3px 0; }
.side { width: 15px; display: flex; flex-direction: column; align-items: center; padding: 3px 1px 0 0; gap: 5px; }
.side h2 { flex: 1; width: 13px; background: #00f; font: 11px/13px var(--ui); writing-mode: vertical-rl; transform: rotate(180deg); padding-top: 3px; }
.log { flex: 1; min-width: 0; border-top: 1px solid #808080; border-left: 1px solid #808080; }
.logrow { display: flex; height: 171px; }
.logview { flex: 1; overflow: hidden; }
table { border-collapse: collapse; table-layout: fixed; width: 100%; }
th, td { padding: 0; text-align: left; white-space: nowrap; overflow: hidden; }
.ctime { width: 158px; }
.log th { height: 17px; padding: 2px 0 0 7px; border-bottom: 2px solid #c0c0c0; color: #0f0; font: bold 12px/13px var(--ui); }
.log td { height: 20px; padding: 0 6px 0 6px; border-bottom: 1px solid #c0c0c0; color: #000; font: bold 12px/18px var(--ui); }
.log th:first-child, .log td:first-child { border-right: 1px solid #c0c0c0; }
.log tbody tr:nth-child(odd) { background: #404040; }
.log td:first-child { padding: 0 0 0 6px; font-size: 13px; }
.log td i { display: inline-block; width: 7px; height: 7px; margin-right: 9px; border-radius: 50%; background: linear-gradient(135deg, #eee 30%, #999 50%, #ccc 60%); }
.termtabs { display: flex; height: 19px; padding: 0 0 1px 4px; }
.termtabs button { display: flex; align-items: center; padding: 0 9px; border: 0; background: linear-gradient(#fff, #fff) 100% 3px / 1px 12px no-repeat; line-height: 17px; }
.termtabs .last { background: none; }
.termtabs .cur { color: #0f0; border-right: 1px solid #c0c0c0; border-bottom: 1px solid #c0c0c0; background: none; }
.termtabs sub { align-self: flex-end; margin-left: 3px; color: #ed1c24; font: bold 9px/11px var(--ui); }
.redbox { position: absolute; left: 17px; top: 6px; width: 469px; height: 177px; border: 5px solid #ed1c24; border-radius: 20px; pointer-events: none; }

.status { display: flex; justify-content: flex-end; height: 24px; border-top: 2px solid #a0a0a0; border-bottom: 2px solid #c0c0c0; padding-top: 3px; }
.status span { border-left: 1px solid #808080; }
.c1 { width: 107px; } .c2 { width: 102px; } .c3 { width: 69px; } .c4 { width: 66px; }
.conn { width: 119px; padding: 2px 5px; }
.conn svg { width: 23px; height: 13px; }

/* dialog */
.dialog { position: absolute; left: 365px; top: 283px; width: 864px; background: #000; border: 2px solid #fff; border-right-color: #c0c0c0; border-bottom-color: #c0c0c0; color: #0f0; }
.inner { position: relative; border: 1px solid #0ff; padding: 1px; }
.dialog header { display: flex; align-items: center; height: 20px; padding: 0 2px; background: #0ff; color: #000; }
.dialog h2 { flex: 1; font: bold 12px/20px var(--ui); }
.body { padding: 8px 8px 8px 6px; }
.tabs { display: flex; align-items: flex-end; height: 20px; padding-left: 2px; gap: 1px; }
.tabs button { height: 18px; border: 1px solid #fff; border-bottom: 0; outline: 0; }
.tabs .cur { width: 45px; height: 22px; margin: 0 -1px -2px; padding-bottom: 4px; background: #000; position: relative; }
.t40 { width: 41px; } .t51 { width: 51px; } .t69 { width: 70px; }
.pane { display: flex; gap: 7px; padding: 8px 10px 9px; border: 2px solid #fff; border-right-color: #c0c0c0; border-bottom-color: #c0c0c0; }
.list { flex: 1; min-height: 460px; border: 2px solid #fff; border-top-color: #c0c0c0; border-left-color: #c0c0c0; }
.cvar { width: 350px; }
.list th { height: 17px; padding: 1px 0 0 6px; font-weight: normal; line-height: 14px; border-bottom: 2px solid #a0a0a0; }
.list td { height: 20px; line-height: 18px; padding-left: 3px; border-bottom: 1px solid #c0c0c0; }
.list th:first-child, .list td:first-child { border-right: 1px solid #c0c0c0; }
.list td:first-child { padding-left: 1px; }
.list td svg { float: left; width: 16px; height: 16px; margin: 1px 4px 0 0; }
.list tbody tr:nth-child(even) { background: #404040; }
.sidebtns { width: 105px; display: flex; flex-direction: column; justify-content: flex-end; gap: 10px; padding-bottom: 1px; }
.btn { height: 23px; border: 2px solid #fff; border-right-color: #c0c0c0; border-bottom-color: #c0c0c0; padding-bottom: 1px; }
.foot { display: flex; justify-content: flex-end; gap: 6px; padding-top: 9px; }
.foot .btn { width: 75px; }
.foot .default { border: 2px solid #fff; outline: 1px solid #c0c0c0; outline-offset: -3px; }
.sizer { position: absolute; right: 1px; bottom: 1px; width: 10px; height: 10px; }
```
